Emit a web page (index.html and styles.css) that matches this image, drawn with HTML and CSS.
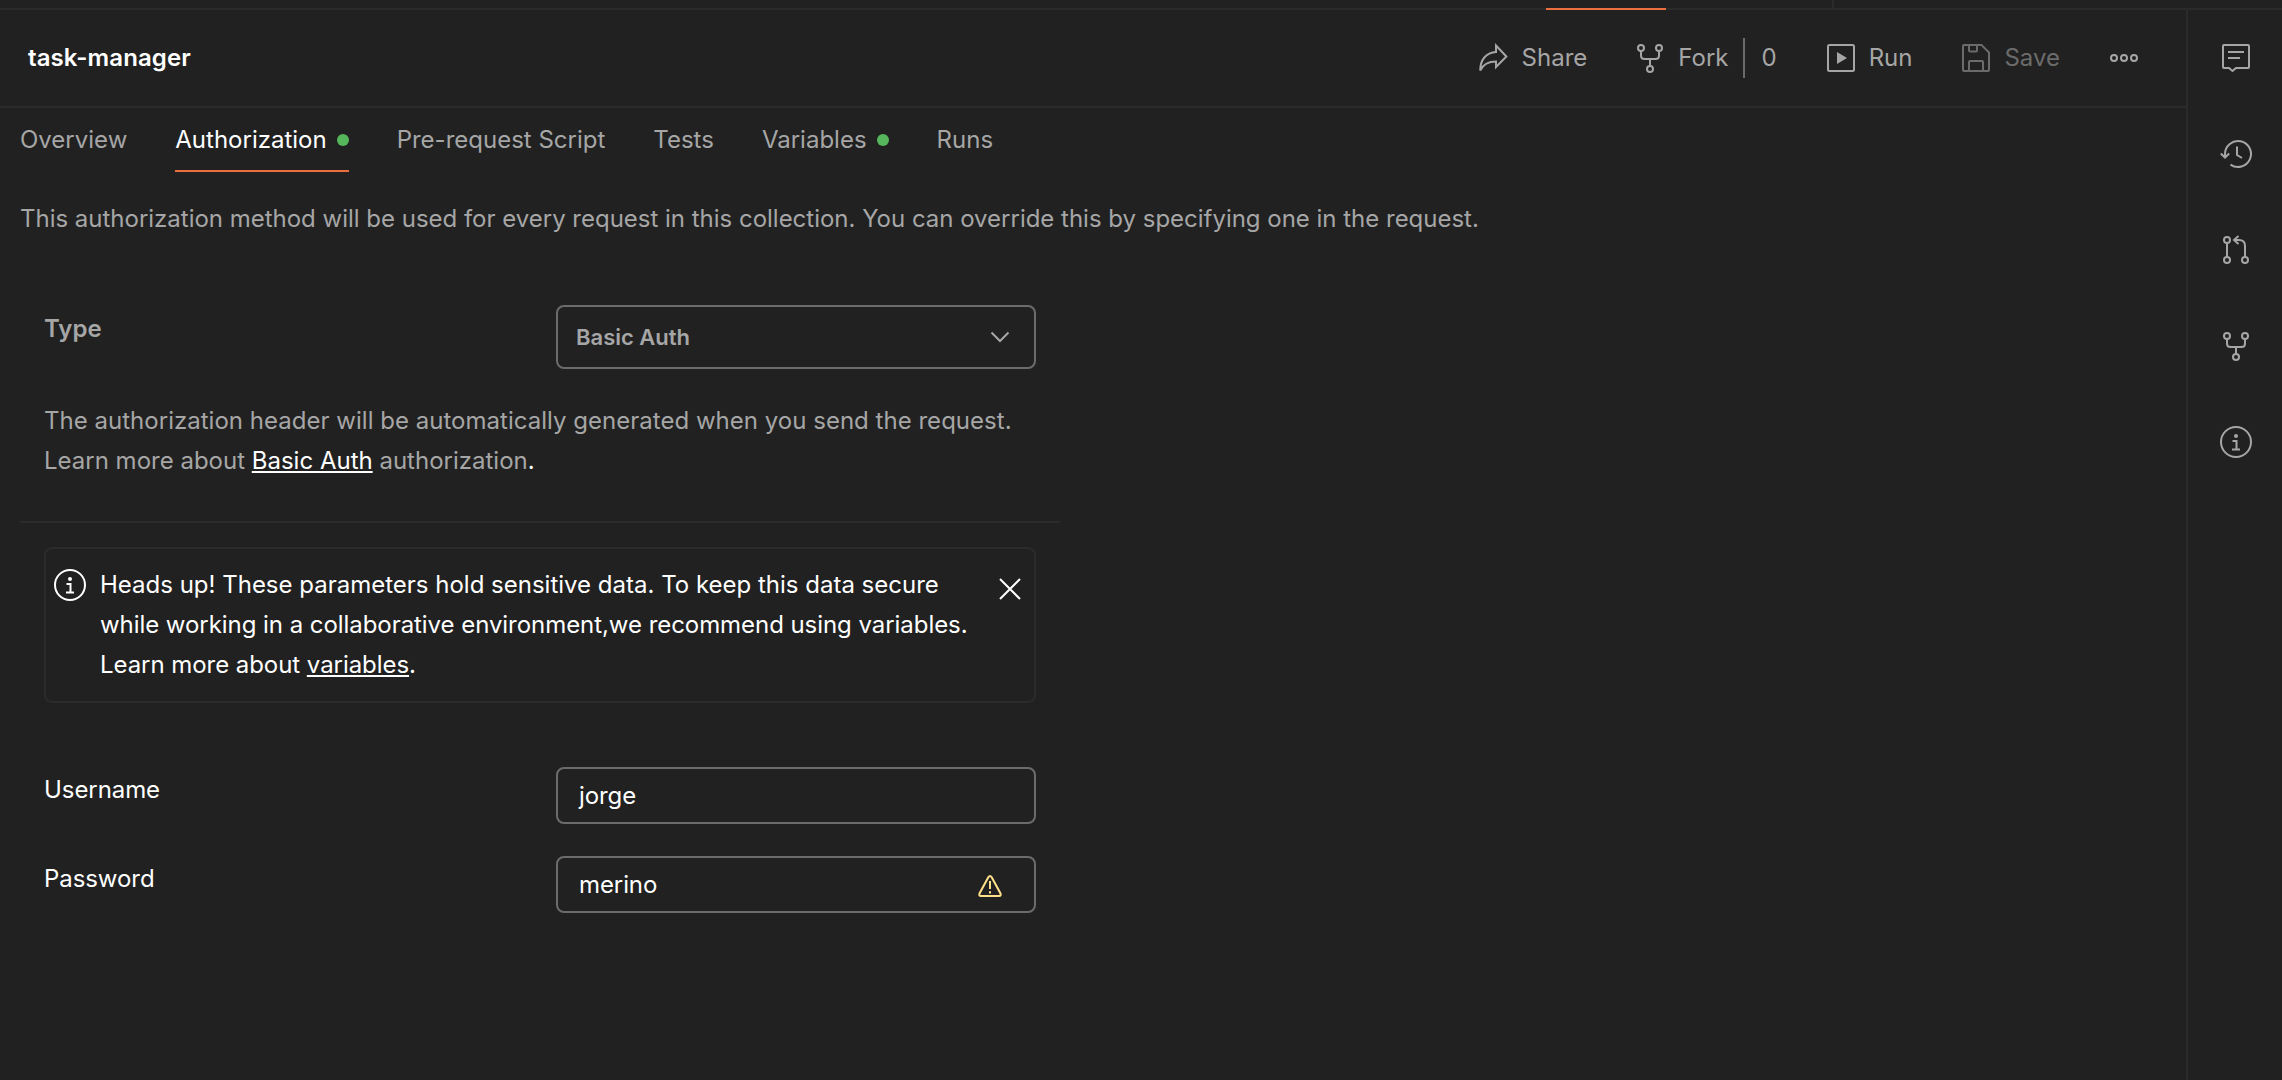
FILE: index.html
```html
<!DOCTYPE html>
<html lang="en">
<head>
<meta charset="utf-8">
<title>task-manager</title>
<link rel="stylesheet" href="styles.css">
</head>
<body>
<div class="app">
  <div class="tabstrip"><span class="tabstrip-active"></span><span class="tabstrip-divider"></span></div>
  <div class="workspace">
    <main class="main">
      <header class="header">
        <h1 class="title">task-manager</h1>
        <div class="actions">
          <button class="action share">
            <svg width="32" height="32" viewBox="0 0 32 32"><path d="M18 3.5 L28.4 14.5 L18 25 V19.5 C10 19.5 5 22.5 2.2 28.5 C2.2 18 8 10.5 18 10 Z"/></svg>
            <span>Share</span>
          </button>
          <button class="action fork">
            <svg width="32" height="32" viewBox="0 0 32 32"><circle cx="7" cy="6" r="3"/><circle cx="25" cy="6" r="3"/><circle cx="16" cy="27" r="3"/><path d="M7 9v4.500q0 3.500 3.500 3.500h11q3.500 0 3.500-3.500V9M16 17v7"/></svg>
            <span>Fork</span>
          </button>
          <span class="fork-count">0</span>
          <button class="action run">
            <svg width="32" height="32" viewBox="0 0 32 32"><rect x="3" y="3" width="26" height="26" rx="1.500"/><path class="solid" d="M12 10l10 6-10 6z"/></svg>
            <span>Run</span>
          </button>
          <button class="action save">
            <svg width="32" height="32" viewBox="0 0 32 32"><path d="M4 3h17.500L29 10.500V28q0 1-1 1H4q-1 0-1-1V4q0-1 1-1zM9 3v5.500q0 1 1 1h6q1 0 1-1V3M9 29V20q0-1 1-1h12q1 0 1 1v9"/></svg>
            <span>Save</span>
          </button>
          <button class="action more">
            <svg width="32" height="32" viewBox="0 0 32 32"><circle cx="6" cy="16" r="3"/><circle cx="16" cy="16" r="3"/><circle cx="26" cy="16" r="3"/></svg>
          </button>
        </div>
      </header>
      <nav class="tabs">
        <a class="tab">Overview</a>
        <a class="tab active">Authorization<i class="dot"></i></a>
        <a class="tab">Pre-request Script</a>
        <a class="tab">Tests</a>
        <a class="tab">Variables<i class="dot"></i></a>
        <a class="tab">Runs</a>
      </nav>
      <p class="intro">This authorization method will be used for every request in this collection. You can override this by specifying one in the request.</p>
      <section class="auth">
        <div class="type-row">
          <label class="type-label">Type</label>
          <div class="select"><span>Basic Auth</span>
            <svg width="20" height="12" viewBox="0 0 20 12"><path d="M1.500 1.500l8.500 8.500 8.500-8.500"/></svg>
          </div>
        </div>
        <p class="help"><span class="help-lead">The authorization header will be automatically generated when you send the request.</span><br>Learn more about <a class="link">Basic Auth</a> authorization<span class="stop">.</span></p>
        <hr class="rule">
        <div class="notice">
          <svg class="notice-icon" width="32" height="32" viewBox="0 0 32 32"><circle cx="16" cy="16" r="15"/><circle class="solid" cx="16" cy="10" r="2"/><path d="M12.500 15H16.500V23.500M12 23.500h8"/></svg>
          <p class="notice-text">Heads up! These parameters hold sensitive data. To keep this data secure<br><span class="tight">while working in a collaborative environment,we recommend using variables.</span><br><span class="tight">Learn more about <a class="link">variables</a>.</span></p>
          <svg class="notice-close" width="22" height="22" viewBox="0 0 22 22"><path d="M1 1l20 20M21 1L1 21"/></svg>
        </div>
        <div class="field"><label>Username</label><div class="input"><span>jorge</span></div></div>
        <div class="field"><label>Password</label><div class="input"><span>merino</span>
          <svg class="warning" width="24" height="24" viewBox="0 0 24 24"><path d="M10.300 3.200q1.700-2.500 3.400 0l8.800 16.300q.8 2.500-1.500 2.500H3q-2.300 0-1.500-2.500zM12 7v8M12 17.200v2.200"/></svg>
        </div></div>
      </section>
    </main>
    <aside class="rail">
      <svg width="32" height="32" viewBox="0 0 32 32"><path d="M4 3h24q1 0 1 1v21q0 1-1 1H16l-3.500 3-3.500-3H4q-1 0-1-1V4q0-1 1-1zM8 10h16M8 16h12"/></svg>
      <svg width="32" height="32" viewBox="0 0 32 32"><path d="M5 19V16A13 13 0 1 1 10.500 26.600M.8 15.500L5 19.500 9.200 15.500M17 8.500V17l5 3"/></svg>
      <svg width="32" height="32" viewBox="0 0 32 32"><circle cx="7" cy="6" r="3"/><circle cx="7" cy="26" r="3"/><circle cx="25" cy="26" r="3"/><path d="M7 9v14M25 23V12q0-6-6-6h-4M18.500 2L14 6l4.500 4"/></svg>
      <svg width="32" height="32" viewBox="0 0 32 32"><circle cx="7" cy="6" r="3"/><circle cx="25" cy="6" r="3"/><circle cx="16" cy="27" r="3"/><path d="M7 9v4.500q0 3.500 3.500 3.500h11q3.500 0 3.500-3.500V9M16 17v7"/></svg>
      <svg width="32" height="32" viewBox="0 0 32 32"><circle cx="16" cy="16" r="15"/><circle class="solid" cx="16" cy="10" r="2"/><path d="M12.500 15H16.500V23.500M12 23.500h8"/></svg>
    </aside>
  </div>
</div>
</body>
</html>
```

FILE: styles.css
```css
* { box-sizing: border-box; }
body {
  margin: 0;
  background: #212121;
  color: #a6a6a6;
  font: 400 24px/40px Inter, sans-serif;
}
p, h1 { margin: 0; }
svg { display: block; flex: none; fill: none; stroke: currentColor; stroke-width: 2; }
.solid { fill: currentColor; stroke: none; }
.app { width: 2282px; height: 1080px; display: flex; flex-direction: column; overflow: hidden; }
.tabstrip { height: 10px; flex: none; border-bottom: 2px solid #2b2b2b; display: flex; }
.tabstrip-active { width: 120px; height: 2px; margin: 8px 0 0 1546px; background: #eb6f3e; }
.tabstrip-divider { width: 2px; height: 8px; margin-left: 166px; background: #2b2b2b; }
.workspace { flex: 1; display: flex; min-height: 0; }
.main { flex: 1; min-width: 0; }
.header {
  height: 98px;
  padding: 0 46px 0 28px;
  display: flex;
  align-items: center;
  justify-content: space-between;
  border-bottom: 2px solid #2b2b2b;
}
.title { font-size: 24px; font-weight: 600; line-height: 40px; letter-spacing: 0.1px; color: #fff; }
.actions { display: flex; align-items: center; }
.action {
  display: flex;
  align-items: center;
  gap: 12px;
  padding: 0;
  border: 0;
  background: none;
  font: inherit;
  color: inherit;
}
.fork { margin-left: 47px; }
.fork-count { margin-left: 15px; padding-left: 16px; border-left: 2px solid #6b6b6b; }
.run { margin-left: 48px; }
.save { margin-left: 48px; color: #6b6b6b; }
.more { margin-left: 48px; }
.tabs { height: 64px; padding-left: 20px; display: flex; gap: 48px; }
.tab { height: 64px; padding-top: 12px; display: flex; gap: 10px; border-bottom: 2px solid transparent; }
.tab.active { color: #fff; border-bottom-color: #eb6f3e; }
.dot { width: 12px; height: 12px; margin-top: 14px; border-radius: 50%; background: #56b65c; }
.intro { padding: 27px 0 0 20px; letter-spacing: -0.012px; white-space: nowrap; }
.auth { width: 1040px; margin: 66px 0 0 20px; padding: 0 24px; }
.type-row { display: flex; justify-content: space-between; }
.type-label { font-weight: 600; padding-top: 4px; }
.select {
  width: 480px;
  height: 64px;
  padding: 0 24px 0 18px;
  display: flex;
  align-items: center;
  justify-content: space-between;
  border: 2px solid #6b6b6b;
  border-radius: 8px;
  font-size: 22px;
  font-weight: 600;
}
.help { margin-top: 32px; white-space: nowrap; }
.help-lead { letter-spacing: 0.02px; }
.link { color: #fff; text-decoration: underline; }
.stop { color: #fff; }
.rule { height: 2px; margin: 40px -24px 24px; border: 0; background: #2b2b2b; }
.notice {
  height: 156px;
  padding: 16px 13px 0 8px;
  display: flex;
  align-items: flex-start;
  border: 2px solid #2b2b2b;
  border-radius: 8px;
  color: #fff;
}
.notice-icon { margin-top: 4px; }
.notice-text { flex: 1; margin-left: 14px; white-space: nowrap; }
.tight { letter-spacing: -0.055px; }
.notice-close { margin-top: 13px; }
.field { margin-top: 32px; display: flex; justify-content: space-between; color: #fff; }
.notice + .field { margin-top: 64px; }
.field label { padding-top: 3px; letter-spacing: -0.07px; }
.input {
  width: 480px;
  height: 57px;
  padding: 0 32px 0 21px;
  display: flex;
  align-items: center;
  justify-content: space-between;
  border: 2px solid #6b6b6b;
  border-radius: 8px;
  letter-spacing: -0.1px;
}
.warning { margin-top: 2px; color: #ffe08a; }
.rail {
  width: 96px;
  flex: none;
  padding: 32px 0 0 32px;
  display: flex;
  flex-direction: column;
  gap: 64px;
  border-left: 2px solid #2b2b2b;
}
```
